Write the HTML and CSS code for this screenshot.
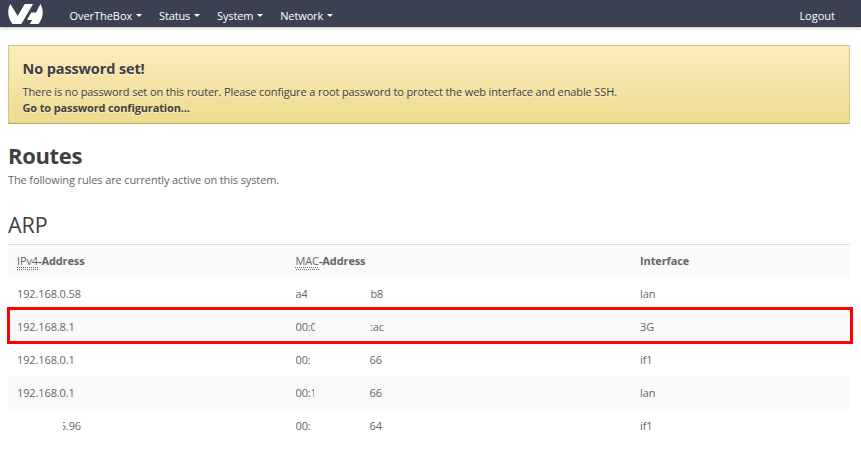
FILE: index.html
```html
<!DOCTYPE html>
<html lang="en">
<head>
<meta charset="utf-8">
<title>OverTheBox - Routes</title>
<link rel="stylesheet" href="styles.css">
</head>
<body>
<header class="navbar">
  <svg class="logo" width="35" height="20" viewBox="0 0 35 20" fill="#fff" aria-label="OVH"><path d="M2.4 0 9.7 12 16.7 0H25L13.4 20H4.5C-.2 14 -1.2 6.5 2.4 0Z"/><path d="M32.4 0C36.2 6.5 35.2 14 30.5 20H21.8L24.1 16H19L23.3 8.5H28.3L26.1 12.2 32.4 0Z"/></svg>
  <nav class="menu">
    <a class="brand">OverTheBox<i class="caret"></i></a>
    <a>Status<i class="caret"></i></a>
    <a>System<i class="caret"></i></a>
    <a>Network<i class="caret"></i></a>
  </nav>
  <a class="logout">Logout</a>
</header>
<main class="content">
  <section class="alert">
    <h4>No password set!</h4>
    <p>There is no password set on this router. Please configure a root password to protect the web interface and enable SSH.</p>
    <a>Go to password configuration...</a>
  </section>
  <h2>Routes</h2>
  <p class="description">The following rules are currently active on this system.</p>
  <h3>ARP</h3>
  <div class="table">
    <div class="row head"><div><abbr>IPv4</abbr>-Address</div><div><abbr>MAC</abbr>-Address</div><div>Interface</div></div>
    <div class="row"><div>192.168.0.58</div><div class="mac"><span class="start two">a4</span><span class="end">b8</span></div><div>lan</div></div>
    <div class="row selected"><div>192.168.8.1</div><div class="mac"><span class="start wide">00:0</span><span class="end">:ac</span></div><div>3G</div></div>
    <div class="row"><div>192.168.0.1</div><div class="mac"><span class="start colon">00:</span><span class="end">66</span></div><div>if1</div></div>
    <div class="row"><div>192.168.0.1</div><div class="mac"><span class="start one">00:1</span><span class="end">66</span></div><div>lan</div></div>
    <div class="row"><div class="partial"><span>5.96</span></div><div class="mac"><span class="start">00:</span><span class="end">64</span></div><div>if1</div></div>
  </div>
</main>
</body>
</html>
```
FILE: styles.css
```css
* { box-sizing: border-box; }
body { margin: 0; background: #fff; color: #666; font: 11px/16px "Open Sans", sans-serif; letter-spacing: -.118px; }
h2, h3, h4, p { margin: 0; }
.navbar { display: flex; align-items: flex-start; height: 27px; padding: 4px 26px 0 8px; background: #3c4151; box-shadow: 0 1px 3px rgba(0,0,0,.25), inset 0 -1px 0 rgba(0,0,0,.1); color: #fff; letter-spacing: 0; }
.logo { display: block; margin-right: 26.5px; }
.menu { display: flex; gap: 17.3px; padding-top: 4px; }
.menu a { display: flex; align-items: center; letter-spacing: -.12px; }
.menu .brand { letter-spacing: -.05px; }
.caret { margin-left: 3.5px; margin-top: -2px; border: 3px solid transparent; border-top-color: #fff; border-bottom: 0; }
.logout { margin-left: auto; padding-top: 4px; }
.content { padding: 18px 11px 0 8px; }
.alert { height: 79px; padding: 14px 13.5px 0; border: 1px solid #d3c583; border-bottom-color: #b5a764; background: linear-gradient(#faecbe, #eddb8e); color: #404040; text-shadow: 0 1px 0 rgba(255,255,255,.5); }
.alert h4 { margin-bottom: 6px; font-size: 14.5px; line-height: 18px; }
.alert a { display: block; font-weight: 700; letter-spacing: -.14px; }
h2 { margin-top: 16px; color: #404040; font-size: 22px; line-height: 30px; letter-spacing: -.35px; }
.description { margin-top: 2px; }
h3 { margin: 22px 0 4px; color: #404040; font-size: 21.5px; font-weight: 400; line-height: 30px; }
.table { border-top: 1px solid #ddd; }
.row { display: grid; grid-template-columns: 278.5px 344.5px 1fr; align-items: center; height: 33px; padding-left: 9px; }
.row.head { height: 32px; font-weight: 700; }
.row:nth-child(odd) { background: #f9f9f9; }
abbr { border-bottom: 1px dotted #666; padding-bottom: 1px; font-weight: 400; text-decoration: underline dotted 1px; text-underline-offset: 2px; }
.selected { position: relative; }
.selected::after { content: ""; position: absolute; inset: -3px -3px -1px -1px; border: 3px solid #f00; }
.mac { display: flex; }
.start { width: 16px; margin-right: 58px; overflow: hidden; white-space: nowrap; }
.two { width: 11px; margin-right: 64px; }
.wide { width: 19px; margin-right: 55.5px; }
.colon { width: 14px; margin-right: 60px; }
.one { width: 18px; margin-right: 56px; }
.end { white-space: nowrap; }
.partial { display: flex; padding-left: 46px; }
.partial span { display: flex; justify-content: flex-end; width: 18px; overflow: hidden; }
```
